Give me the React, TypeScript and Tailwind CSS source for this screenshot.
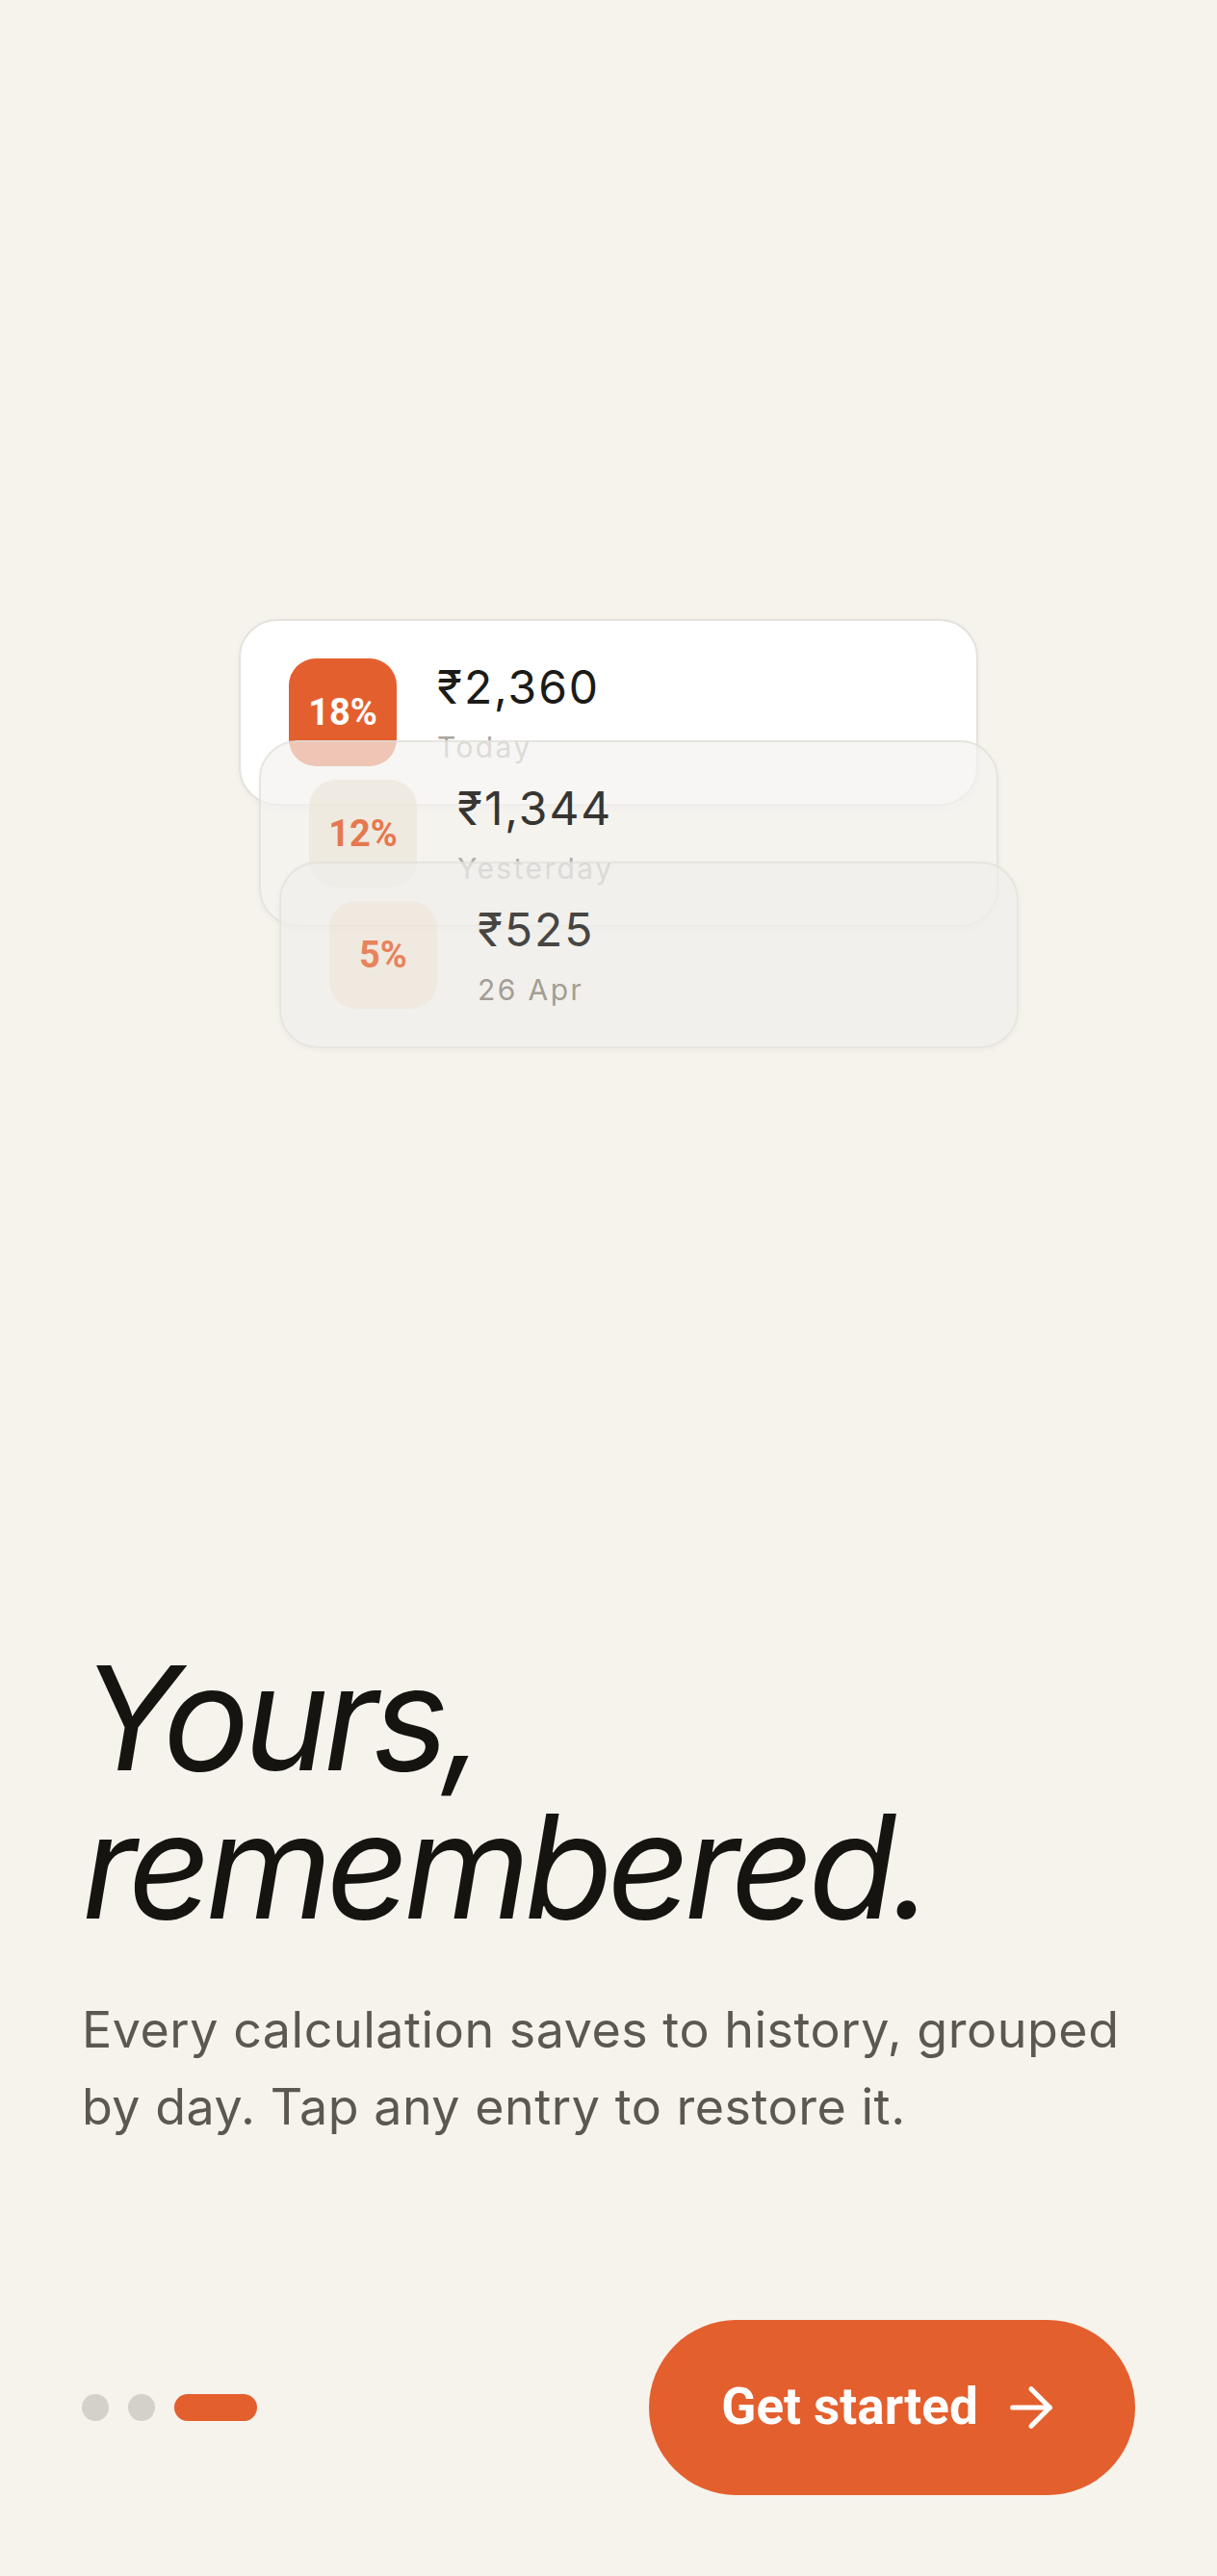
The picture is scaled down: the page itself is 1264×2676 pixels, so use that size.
import { ArrowRight } from 'lucide-react';

type Entry = {
  rate: string;
  amount: string;
  label: string;
};

const entries: Entry[] = [
  { rate: '18%', amount: '₹2,360', label: 'Today' },
  { rate: '12%', amount: '₹1,344', label: 'Yesterday' },
  { rate: '5%', amount: '₹525', label: '26 Apr' },
];

const inter = { fontFamily: 'Inter, "Noto Sans", sans-serif' };
const roboto = { fontFamily: 'Roboto, "Liberation Sans", sans-serif' };

export default function App() {
  return (
    <div
      className="h-[2676px] w-full flex flex-col bg-[#f6f3ec] px-[85px] pb-[84px]"
      style={inter}
    >
      {/* History card stack */}
      <div className="flex-1 flex items-center justify-center pt-[24px]">
        <div className="w-[768px] flex flex-col">
          {/* Top card */}
          <div className="relative z-10 h-[194px] rounded-[40px] border-2 border-[#e4e2dd] bg-white flex items-center pl-[50px] shadow-[0_2px_6px_rgba(0,0,0,0.04)]">
            <div className="w-[112px] h-[112px] rounded-[28px] bg-[#e45f2e] flex items-center justify-center">
              <span className="text-[38px] font-bold text-white" style={roboto}>
                {entries[0].rate}
              </span>
            </div>
            <div className="ml-[42px] flex flex-col">
              <span className="text-[48px] leading-[56px] text-[#1c1b18] tracking-[0.04em]">
                {entries[0].amount}
              </span>
              <span className="mt-[16px] text-[30px] leading-[36px] text-[#aaa69e] tracking-[0.08em]">
                {entries[0].label}
              </span>
            </div>
          </div>

          {/* Middle card */}
          <div className="relative z-20 -mt-[68px] ml-[21px] -mr-[21px] h-[194px] rounded-[40px] border-2 border-[#e4e2dd] bg-[#f4f3f0]/80 flex items-center pl-[50px] opacity-[0.88] shadow-[0_2px_6px_rgba(0,0,0,0.04)]">
            <div className="w-[112px] h-[112px] rounded-[28px] bg-[#efe9df] flex items-center justify-center">
              <span className="text-[38px] font-bold text-[#e4683a]" style={roboto}>
                {entries[1].rate}
              </span>
            </div>
            <div className="ml-[42px] flex flex-col">
              <span className="text-[48px] leading-[56px] text-[#1c1b18] tracking-[0.04em]">
                {entries[1].amount}
              </span>
              <span className="mt-[16px] text-[30px] leading-[36px] text-[#aaa69e] tracking-[0.08em]">
                {entries[1].label}
              </span>
            </div>
          </div>

          {/* Bottom card */}
          <div className="relative z-30 -mt-[68px] ml-[42px] -mr-[42px] h-[194px] rounded-[40px] border-2 border-[#e4e2dd] bg-[#f0efec]/85 flex items-center pl-[50px] opacity-[0.8] shadow-[0_2px_6px_rgba(0,0,0,0.04)]">
            <div className="w-[112px] h-[112px] rounded-[28px] bg-[#efe7dc] flex items-center justify-center">
              <span className="text-[38px] font-bold text-[#e4683a]" style={roboto}>
                {entries[2].rate}
              </span>
            </div>
            <div className="ml-[42px] flex flex-col">
              <span className="text-[48px] leading-[56px] text-[#1c1b18] tracking-[0.04em]">
                {entries[2].amount}
              </span>
              <span className="mt-[16px] text-[30px] leading-[36px] text-[#8f8a80] tracking-[0.08em]">
                {entries[2].label}
              </span>
            </div>
          </div>
        </div>
      </div>

      {/* Copy */}
      <h1 className="text-[150px] leading-[154px] italic font-normal tracking-[-0.04em] text-[#151410]">
        Yours,
        <br />
        remembered.
      </h1>
      <p className="mt-[53px] text-[52px] leading-[80px] text-[#5c5850] tracking-[0.01em]">
        Every calculation saves to history, grouped by day. Tap any entry to restore it.
      </p>

      {/* Footer */}
      <div className="mt-[181px] flex items-center justify-between">
        <div className="flex items-center gap-[20px]">
          <span className="w-[28px] h-[28px] rounded-full bg-[#d4d1cb]" />
          <span className="w-[28px] h-[28px] rounded-full bg-[#d4d1cb]" />
          <span className="w-[86px] h-[28px] rounded-full bg-[#e45f2e]" />
        </div>
        <button
          className="h-[182px] w-[505px] rounded-full bg-[#e45f2e] flex items-center justify-center gap-[22px] text-white"
          style={roboto}
        >
          <span className="text-[53px] font-bold">Get started</span>
          <ArrowRight size={66} strokeWidth={1.9} />
        </button>
      </div>
    </div>
  );
}
